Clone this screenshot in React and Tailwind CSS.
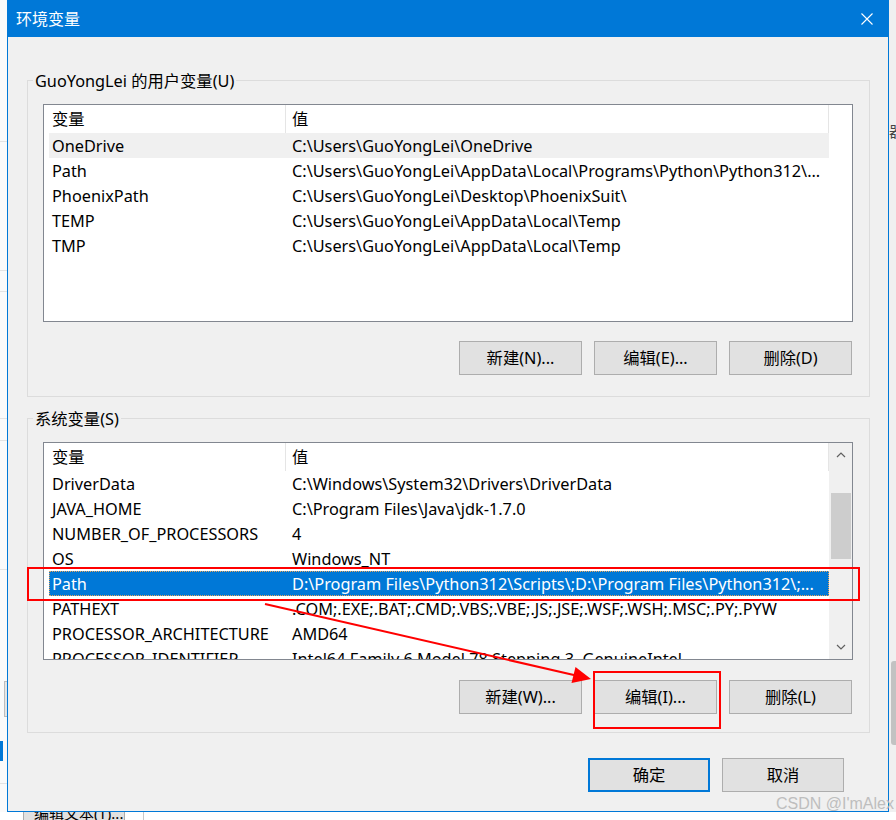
import React from 'react'

const userVars = [
  ['OneDrive', 'C:\\Users\\GuoYongLei\\OneDrive'],
  ['Path', 'C:\\Users\\GuoYongLei\\AppData\\Local\\Programs\\Python\\Python312\\...'],
  ['PhoenixPath', 'C:\\Users\\GuoYongLei\\Desktop\\PhoenixSuit\\'],
  ['TEMP', 'C:\\Users\\GuoYongLei\\AppData\\Local\\Temp'],
  ['TMP', 'C:\\Users\\GuoYongLei\\AppData\\Local\\Temp'],
]

const sysVars = [
  ['DriverData', 'C:\\Windows\\System32\\Drivers\\DriverData'],
  ['JAVA_HOME', 'C:\\Program Files\\Java\\jdk-1.7.0'],
  ['NUMBER_OF_PROCESSORS', '4'],
  ['OS', 'Windows_NT'],
  ['Path', 'D:\\Program Files\\Python312\\Scripts\\;D:\\Program Files\\Python312\\;...'],
  ['PATHEXT', '.COM;.EXE;.BAT;.CMD;.VBS;.VBE;.JS;.JSE;.WSF;.WSH;.MSC;.PY;.PYW'],
  ['PROCESSOR_ARCHITECTURE', 'AMD64'],
  ['PROCESSOR_IDENTIFIER', 'Intel64 Family 6 Model 78 Stepping 3, GenuineIntel'],
]

const Row = ({ name, value, state }) => {
  let look = ''
  if (state === 'selected') look = 'bg-[#0078d7] text-white outline outline-1 outline-dotted outline-[#e8a45c] -outline-offset-1'
  if (state === 'hover') look = 'bg-[#f0f0f0]'
  return (
    <div className={`ml-[5px] w-[780px] h-[25px] shrink-0 flex leading-[27px] whitespace-nowrap overflow-hidden ${look}`}>
      <div className="w-[237px] shrink-0 pl-[3px] overflow-hidden">{name}</div>
      <div className="flex-1 pl-[6px] overflow-hidden">{value}</div>
    </div>
  )
}

const Chevron = ({ down }) => (
  <svg width="10" height="6" viewBox="0 0 10 6">
    <polyline
      points={down ? '1,1 5,5 9,1' : '1,5 5,1 9,5'}
      fill="none"
      stroke="#606060"
      strokeWidth="1.2"
    />
  </svg>
)

const VarList = ({ rows, selected, hover, scroll }) => (
  <div className="w-[810px] h-[218px] border border-[#828790] bg-white flex overflow-hidden">
    <div className="w-[785px] shrink-0 flex flex-col overflow-hidden">
      {/* header */}
      <div className="h-[28px] shrink-0 flex leading-[29px]">
        <div className="w-[242px] pl-[8px] border-r border-[#e5e5e5]">变量</div>
        <div className="flex-1 pl-[6px] border-r border-[#e5e5e5]">值</div>
      </div>
      {rows.map(([n, v], i) => (
        <Row key={n + i} name={n} value={v} state={i === selected ? 'selected' : i === hover ? 'hover' : ''} />
      ))}
    </div>
    {scroll && (
      <div className="w-[23px] bg-[#f0f0f0] flex flex-col items-center">
        <div className="h-[24px] shrink-0 flex items-center justify-center">
          <Chevron />
        </div>
        <div className="mt-[26px] w-[20px] h-[66px] bg-[#cdcdcd]" />
        <div className="mt-auto h-[24px] shrink-0 flex items-center justify-center">
          <Chevron down />
        </div>
      </div>
    )}
  </div>
)

const Btn = ({ children, w = 'w-[123px]', primary }) => (
  <button
    type="button"
    className={`${w} h-[34px] flex items-center justify-center bg-[#e1e1e1] ${
      primary ? 'border-2 border-[#0078d7]' : 'border border-[#adadad]'
    }`}
  >
    {children}
  </button>
)

const Group = ({ label, h, children }) => (
  <div className={`relative w-[843px] border border-[#dcdcdc] pl-[15px] pt-[23px] ${h}`}>
    <span className="absolute left-[5px] -top-[10px] px-[2px] bg-[#f0f0f0] leading-[20px] whitespace-nowrap">{label}</span>
    {children}
  </div>
)

const App = () => {
  return (
    <div className="relative w-[896px] h-[820px] overflow-hidden bg-[#f7f7f7] text-[16.3px] text-black font-['Noto_Sans','Noto_Sans_CJK_SC',sans-serif]">
      <div className="flex h-[812px]">
        {/* window behind, left edge */}
        <div className="w-[7px] shrink-0 flex flex-col bg-[#fafafa]">
          <div className="mt-[141px] h-px bg-[#e3e3e3]" />
          <div className="mt-[128px] h-px bg-[#e3e3e3]" />
          <div className="mt-[20px] h-px bg-[#e3e3e3]" />
          <div className="mt-[126px] h-px bg-[#e3e3e3]" />
          <div className="mt-[21px] h-px bg-[#e3e3e3]" />
          <div className="mt-[128px] h-px bg-[#e3e3e3]" />
          <div className="mt-[111px] h-[36px] ml-[4px] border-l border-y border-[#bdbdbd] bg-[#e6e6e6]" />
          <div className="mt-[24px] h-[20px] w-[3px] bg-[#0078d7]" />
          <div className="mt-[22px] h-px bg-[#e3e3e3]" />
        </div>

        {/* dialog */}
        <div className="w-[882px] shrink-0 h-[812px] flex flex-col bg-[#f0f0f0] border-x border-b border-[#0078d7]">
          <div className="h-[37px] shrink-0 bg-[#0078d7] flex items-center justify-between pl-[8px] pr-[15px] text-white">
            <span className="leading-none text-[16px]">环境变量</span>
            <svg width="12" height="12" viewBox="0 0 12 12">
              <path d="M0.5 0.5L11.5 11.5M11.5 0.5L0.5 11.5" stroke="#fff" strokeWidth="1.1" />
            </svg>
          </div>

          <div className="flex flex-col pl-[19px] pt-[43px]">
            <Group label="GuoYongLei 的用户变量(U)" h="h-[317px]">
              <VarList rows={userVars} hover={0} />
              <div className="mt-[19px] w-[809px] flex justify-end gap-[12px]">
                <Btn>新建(N)...</Btn>
                <Btn>编辑(E)...</Btn>
                <Btn>删除(D)</Btn>
              </div>
            </Group>

            <div className="mt-[21px]">
              <Group label="系统变量(S)" h="h-[315px]">
                <VarList rows={sysVars} selected={4} scroll />
                <div className="mt-[20px] w-[809px] flex justify-end gap-[12px]">
                  <Btn>新建(W)...</Btn>
                  <Btn>编辑(I)...</Btn>
                  <Btn>删除(L)</Btn>
                </div>
              </Group>
            </div>

            <div className="mt-[25px] ml-[561px] flex gap-[12px]">
              <Btn w="w-[122px]" primary>确定</Btn>
              <Btn w="w-[122px]">取消</Btn>
            </div>
          </div>
        </div>

        {/* window behind, right edge */}
        <div className="w-[7px] shrink-0 flex flex-col bg-[#f0f0f0] overflow-hidden">
          <div className="mt-[121px] h-[20px] leading-[20px] text-[15px] text-[#444] whitespace-nowrap">器</div>
          <div className="mt-[520px] ml-[2px] h-[84px] w-[6px] rounded-l-[3px] bg-[#c2c2c2]" />
        </div>
      </div>

      {/* window behind, bottom edge */}
      <div className="h-[8px] flex bg-white overflow-hidden">
        <div className="ml-[23px] w-[102px] h-[20px] border-x border-[#adadad] bg-[#e1e1e1] pl-[10px] text-[15px] leading-[14px] -mt-[6px] whitespace-nowrap overflow-hidden">
          编辑文本(T)...
        </div>
        <div className="ml-[18px] w-px bg-[#c8c8c8]" />
      </div>

      {/* annotations */}
      <div className="absolute left-[27px] top-[567px] w-[833px] h-[34px] border-2 border-[#ff0000]" />
      <div className="absolute left-[593px] top-[671px] w-[128px] h-[58px] border-2 border-[#ff0000]" />
      <svg className="absolute left-0 top-0 pointer-events-none" width="896" height="820">
        <line x1="265" y1="604" x2="576" y2="675.5" stroke="#ff0000" strokeWidth="2" />
        <polygon points="591,679 571.5,683 575.5,667" fill="#ff0000" />
      </svg>

      <span className="absolute left-[776px] top-[795px] text-[16px] leading-[18px] text-[#b9b9b9] font-['Liberation_Sans',sans-serif] whitespace-nowrap opacity-90">
        CSDN @I'mAlex
      </span>
    </div>
  )
}

export default App
